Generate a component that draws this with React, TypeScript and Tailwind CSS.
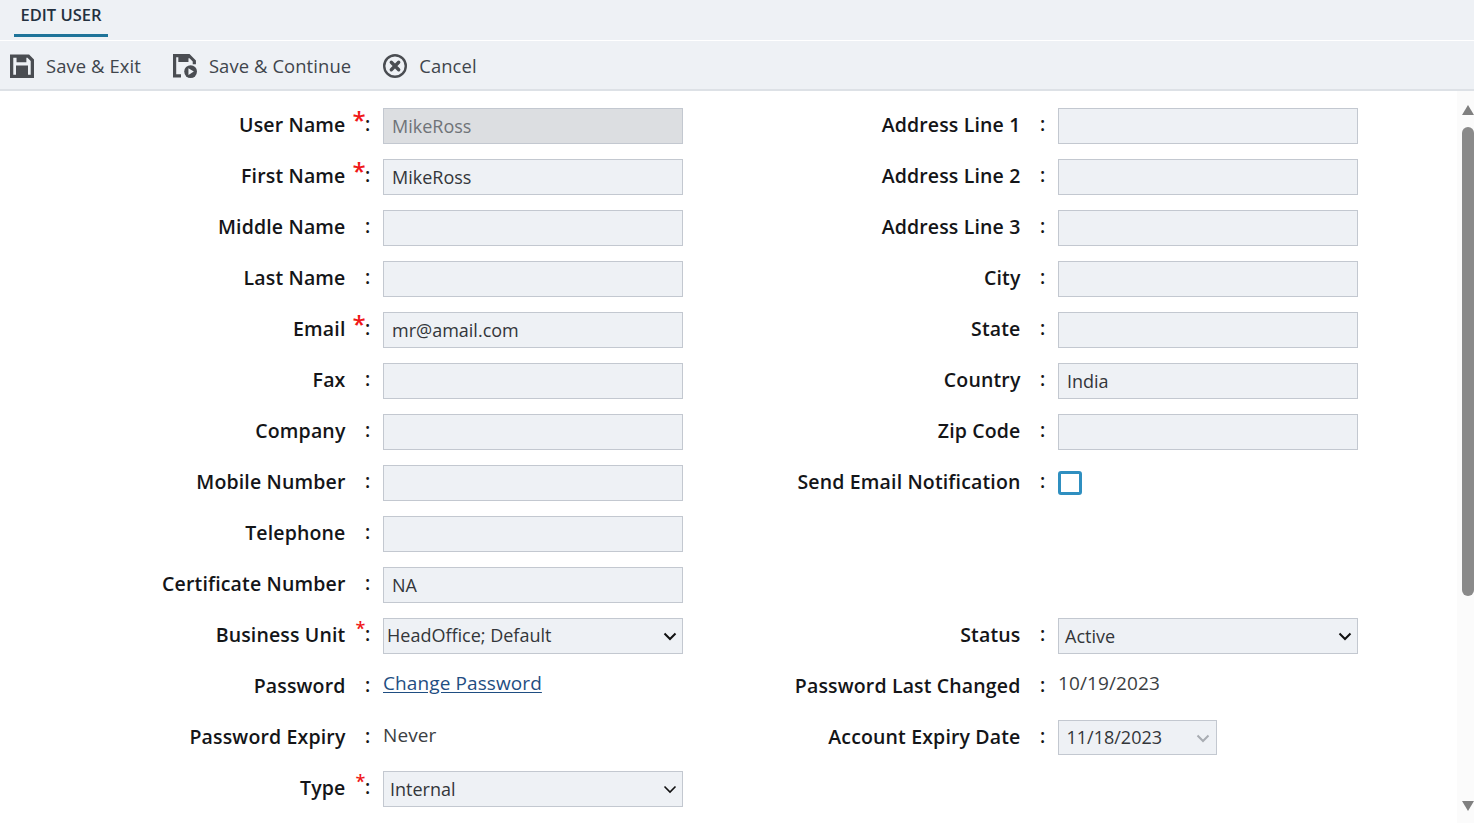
const font = "font-['Open_Sans',sans-serif]";

type Field = {
  label: string;
  required?: boolean;
  smallStar?: boolean;
  kind?: "input" | "disabled" | "select" | "text" | "link" | "check" | "date" | "none";
  value?: string;
  pad?: string;
  textClass?: string;
  thin?: boolean;
};

const rows: [Field, Field][] = [
  [{ label: "User Name", required: true, kind: "disabled", value: "MikeRoss" }, { label: "Address Line 1" }],
  [{ label: "First Name", required: true, value: "MikeRoss" }, { label: "Address Line 2" }],
  [{ label: "Middle Name" }, { label: "Address Line 3" }],
  [{ label: "Last Name" }, { label: "City" }],
  [{ label: "Email", required: true, value: "mr@amail.com" }, { label: "State" }],
  [{ label: "Fax" }, { label: "Country", value: "India" }],
  [{ label: "Company" }, { label: "Zip Code" }],
  [{ label: "Mobile Number" }, { label: "Send Email Notification", kind: "check" }],
  [{ label: "Telephone" }, { label: "", kind: "none" }],
  [{ label: "Certificate Number", value: "NA" }, { label: "", kind: "none" }],
  [
    { label: "Business Unit", required: true, smallStar: true, kind: "select", value: "HeadOffice; Default", pad: "pl-[3px]", textClass: "pb-[2px]" },
    { label: "Status", kind: "select", value: "Active", pad: "pl-[6px]" },
  ],
  [
    { label: "Password", kind: "link", value: "Change Password" },
    { label: "Password Last Changed", kind: "text", value: "10/19/2023", pad: "-mt-[9px]" },
  ],
  [
    { label: "Password Expiry", kind: "text", value: "Never", pad: "-mt-[7px]" },
    { label: "Account Expiry Date", kind: "date", value: "11/18/2023" },
  ],
  [{ label: "Type", required: true, smallStar: true, kind: "select", value: "Internal", pad: "pl-[6px]", thin: true }, { label: "", kind: "none" }],
];

function SaveIcon() {
  return (
    <svg width="24" height="24" viewBox="1 1 22 22" fill="none">
      <path d="M1 1.500h17.500L23 6v17H1z M4 4.500v15.500h2.500V11.500h11V20H20V7.500L17 4.500h-1v4H7v-4z" fill="#4a4d52" fillRule="evenodd" />
      <path d="M9.500 14h5.500v6H9.500z M11.500 15.800v2.400h1.800v-2.400z" fill="#4a4d52" fillRule="evenodd" />
      <path d="M1 20.500h22V23H1z" fill="#4a4d52" />
    </svg>
  );
}

function SaveContinueIcon() {
  return (
    <svg width="24" height="24" viewBox="1 1 22.500 22.500" fill="none">
      <path d="M1 1h15.500l6 6v3.500h-3V8l-3-3h-1v3.500H6V4H4v16h4.500v3H1z" fill="#4a4d52" />
      <circle cx="17.500" cy="17.500" r="6" fill="#4a4d52" />
      <path d="M15.500 14.300v6.400l5-3.200z" fill="#eef1f5" />
    </svg>
  );
}

function CancelIcon() {
  return (
    <svg width="24" height="24" viewBox="0 0 24 24" fill="none">
      <circle cx="12" cy="12" r="10.800" stroke="#4a4d52" strokeWidth="2.400" />
      <path d="M8.300 8.300l7.400 7.400M15.700 8.300l-7.400 7.400" stroke="#4a4d52" strokeWidth="3.400" strokeLinecap="round" />
    </svg>
  );
}

function Chevron({ color = "#111111", width = 2 }: { color?: string; width?: number }) {
  return (
    <svg width={14} height={14} viewBox="0 0 14 14" fill="none">
      <path d="M1.500 4.500L7 10l5.500-5.500" stroke={color} strokeWidth={width} />
    </svg>
  );
}

function Control({ field }: { field: Field }) {
  const box = "border border-[#c3c8d0] text-[18px] flex items-center";
  switch (field.kind) {
    case "none":
      return null;
    case "disabled":
      return <div className={`${box} h-[36px] w-[300px] bg-[#dcdee1] pl-[8px] text-[#6f7378]`}>{field.value}</div>;
    case "select":
      return (
        <div className={`${box} h-[36px] w-[300px] bg-[#eef1f5] justify-between pr-[5px] ${field.pad} text-[#33363a]`}>
          <span className={field.textClass}>{field.value}</span>
          <Chevron width={field.thin ? 1.6 : 2} />
        </div>
      );
    case "text":
      return <div className={`h-[36px] text-[19px] leading-[28px] text-[#3b3e42] ${field.pad} flex items-center tracking-[0.1px]`}>{field.value}</div>;
    case "link":
      return <a className="h-[36px] text-[19px] -mt-[7px] flex items-center text-[#1f4e82] underline underline-offset-2 tracking-[0.1px]">{field.value}</a>;
    case "check":
      return <div className="w-[24px] h-[24px] rounded-[3px] border-[3px] border-[#2f8fc0] bg-white" />;
    case "date":
      return (
        <div className={`${box} w-[159px] h-[35px] -mt-[1px] bg-[#eef1f5] justify-between pl-[7.500px] pr-[6px] text-[#33363a]`}>
          <span>{field.value}</span>
          <Chevron color="#a8acb2" />
        </div>
      );
    default:
      return <div className={`${box} h-[36px] w-[300px] bg-[#eef1f5] pl-[8px] text-[#33363a]`}>{field.value}</div>;
  }
}

function Cell({ field, labelWidth }: { field: Field; labelWidth: string }) {
  if (field.kind === "none") return <div />;
  return (
    <div className="flex items-center h-[36px]">
      <div className={`${labelWidth} text-right pb-[2px] text-[19.500px] font-[650] text-[#141518] tracking-[0.15px] whitespace-nowrap`}>
        {field.label}
      </div>
      <div className="relative w-[37.500px] h-full flex items-center text-[19px] font-[650] text-[#141518]">
        {field.required && !field.smallStar && (
          <span className="absolute left-[7px] top-[0px] text-[24px] leading-[24px] font-semibold text-[#f01818]">*</span>
        )}
        {field.required && field.smallStar && (
          <span className="absolute left-[10px] top-[0px] text-[18px] leading-[20px] font-semibold text-[#f01818]">*</span>
        )}
        <span className="absolute left-[19.500px] top-[2px]">:</span>
      </div>
      <Control field={field} />
    </div>
  );
}

function ToolButton({ icon, label }: { icon: React.ReactNode; label: string }) {
  return (
    <button className="flex items-center gap-[12px] text-[18.400px] text-[#40454c] tracking-[0.1px]">
      {icon}
      <span>{label}</span>
    </button>
  );
}

export default function App() {
  return (
    <div className={`${font} h-screen overflow-hidden bg-white flex flex-col`}>
      <div className="h-[40px] bg-[#eef1f5] pl-[14px] shrink-0">
        <div className="w-[94px] h-[37px] border-b-[3px] border-[#1e7399] text-center text-[16.500px] leading-[30px] font-semibold text-[#24303f]">
          EDIT USER
        </div>
      </div>
      <div className="h-[50px] shrink-0 mt-[1px] bg-[#eef1f5] border-b-2 border-[#dde1e6] flex items-center gap-[32px] pl-[10px] pt-[2px]">
        <ToolButton icon={<SaveIcon />} label="Save & Exit" />
        <ToolButton icon={<SaveContinueIcon />} label="Save & Continue" />
        <ToolButton icon={<CancelIcon />} label="Cancel" />
      </div>
      <div className="flex-1 flex min-h-0">
        <div className="flex-1 pt-[17px] overflow-hidden">
          {rows.map((row, i) => (
            <div key={i} className="grid grid-cols-[683px_1fr] h-[51px]">
              <Cell field={row[0]} labelWidth="w-[345.500px]" />
              <Cell field={row[1]} labelWidth="w-[337.500px]" />
            </div>
          ))}
        </div>
        <div className="relative w-[17px] shrink-0 bg-[#fbfbfb]">
          <div className="absolute right-0 top-[14px] w-0 h-0 border-x-[6px] border-x-transparent border-b-[10px] border-b-[#808080]" />
          <div className="absolute right-0 top-[36px] w-[12px] h-[469px] rounded-[6px] bg-[#8a8a8a]" />
          <div className="absolute right-0 top-[710px] w-0 h-0 border-x-[6px] border-x-transparent border-t-[10px] border-t-[#808080]" />
        </div>
      </div>
    </div>
  );
}
